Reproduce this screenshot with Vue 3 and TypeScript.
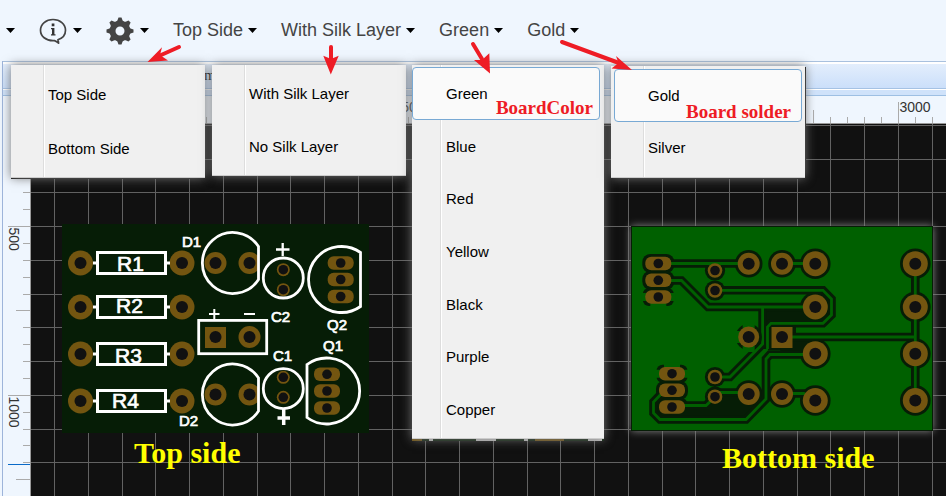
<script setup lang="ts">
import { computed, onBeforeUnmount, onMounted, ref } from 'vue'

interface Menu {
  id: string
  label: string
  items: string[]
  selected?: string
  note?: string
}

const menus: Menu[] = [
  { id: 'side', label: 'Top Side', items: ['Top Side', 'Bottom Side'] },
  { id: 'silk', label: 'With Silk Layer', items: ['With Silk Layer', 'No Silk Layer'] },
  {
    id: 'color',
    label: 'Green',
    items: ['Green', 'Blue', 'Red', 'Yellow', 'Black', 'Purple', 'Copper'],
    selected: 'Green',
    note: 'BoardColor',
  },
  { id: 'solder', label: 'Gold', items: ['Gold', 'Silver'], selected: 'Gold', note: 'Board solder' },
]

// The rulers and the grid are drawn only as far as the window reaches.
const viewWidth = ref(window.innerWidth)
const viewHeight = ref(window.innerHeight)
function measure(): void {
  viewWidth.value = window.innerWidth
  viewHeight.value = window.innerHeight
}
onMounted(() => window.addEventListener('resize', measure))
onBeforeUnmount(() => window.removeEventListener('resize', measure))

// Grid cells are 33.75px; the rulers carry two ticks per cell.
const CELL = 33.75
function lines(origin: number, extent: number): number[] {
  return Array.from({ length: Math.ceil(extent / CELL) }, (_, i) => Math.round(origin + CELL * i) + 0.5)
}
const gridX = computed(() => lines(23, viewWidth.value))
const gridY = computed(() => lines(0.75, viewHeight.value))

interface Tick {
  at: number
  size: number
  label: string
}
function ticks(origin: number, first: number, extent: number): Tick[] {
  const count = Math.floor((extent - origin) / (CELL / 2)) - first + 1
  return Array.from({ length: Math.max(count, 0) }, (_, i) => {
    const k = i + first
    const major = k % 10 === 0
    const mid = k % 5 === 0
    return {
      at: Math.round(origin + (CELL / 2) * k) + 0.5,
      size: major ? 22 : mid ? 14 : 7,
      label: major ? String((k / 10 + 1) * 500) : '',
    }
  })
}
const topTicks = computed(() => ticks(23, -1, viewWidth.value - 31))
const leftTicks = computed(() => ticks(130, -7, viewHeight.value - 96))

const resistors = [
  { name: 'R1', y: 263, tx: 117, ty: 271 },
  { name: 'R2', y: 307, tx: 116, ty: 313 },
  { name: 'R3', y: 354, tx: 115, ty: 363 },
  { name: 'R4', y: 401, tx: 112, ty: 408 },
]
const names = [
  { t: 'D1', x: 182, y: 247 },
  { t: 'C2', x: 271, y: 322 },
  { t: 'Q2', x: 327, y: 330 },
  { t: 'Q1', x: 323, y: 351 },
  { t: 'C1', x: 273, y: 361 },
  { t: 'D2', x: 179, y: 426 },
]

interface Pad {
  x: number
  y: number
  r: number
  h: number
}
const pad = (x: number, y: number, r: number, h: number): Pad => ({ x, y, r, h })
const topPads: Pad[] = [
  ...resistors.flatMap((r) => [pad(80.5, r.y, 12.5, 6), pad(182, r.y, 12.5, 6)]),
  pad(215.5, 263, 11, 6),
  pad(215.5, 394.5, 11, 6),
  pad(249.5, 263, 11, 6),
  pad(249.5, 394.5, 11, 6),
  pad(249.5, 337, 11, 6),
  pad(283.3, 269.7, 6.5, 4.8),
  pad(283.3, 289.7, 6.5, 4.8),
  pad(283.3, 377.3, 6.5, 4.8),
  pad(283.3, 397.3, 6.5, 4.8),
]
const topOvals = [
  [340.7, 263], [340.7, 279.5], [340.7, 296.5],
  [327, 374.3], [327, 391], [327, 408],
]
const bottomPads: Pad[] = [
  pad(715, 270.5, 7.3, 4.8),
  pad(715, 290.5, 7.3, 4.8),
  pad(715, 377, 7.3, 4.8),
  pad(715, 396.7, 7.3, 4.8),
  pad(748.7, 263.7, 11, 6),
  pad(782, 263.7, 11, 6),
  pad(748.7, 394, 11, 6),
  pad(782, 394, 11, 6),
  ...[263.7, 307, 353.7, 400.5].flatMap((y) => [pad(815.3, y, 12.5, 6), pad(915.3, y, 12.5, 6)]),
]
const bottomOvals = [
  [658.3, 263.5], [658.3, 280.3], [658.3, 297],
  [672, 373.7], [672, 390.3], [672, 407],
]
const clearOvals = bottomOvals.filter((_, i) => i !== 2 && i !== 3)
const thermalOvals = [bottomOvals[2], bottomOvals[3]]

const traces = [
  'M658 263.5H748',
  'M658 280.5H681.5L708 307H815',
  'M715 290.3H823L831.5 299V315L823 323.3H771L767.5 327V349',
  'M762.6 307V344L730 377H715',
  'M672 405.5H706L715 397',
  'M715 392.5H748',
  'M815 354.5H770L766 359V399L746 419.5H660L653.5 413V402L664 391',
  'M782 263.5H815',
  'M782 337H915',
  'M782 393.5H804L815 400',
  'M915.3 263V400',
]
</script>

<template>
  <div class="app">
    <header class="toolbar">
      <button class="tool" type="button" aria-label="More">
        <svg class="caret" viewBox="0 0 9 5"><path d="M0 0H9L4.5 5Z" /></svg>
      </button>
      <button class="tool" type="button" aria-label="Info">
        <svg class="info" viewBox="0 0 28 28">
          <path
            d="M14 2.5C7 2.5 1.5 7 1.5 13.2C1.5 19.4 7 23.7 14 23.7L15.5 23.6C17 24.2 18.3 25 19.6 26.2C19.5 24.7 19.3 23.7 18.9 22.7C23.5 21.2 26.5 17.6 26.5 13.2C26.5 7 21 2.5 14 2.5Z"
            fill="none" stroke="#444" stroke-width="1.7" stroke-linejoin="round"
          />
          <path d="M12.7 6.5H15.4V9.2H12.7ZM12 11H15.4V17.3H16.5V18.5H12V17.3H13V12.2H12Z" fill="#333" />
        </svg>
        <svg class="caret" viewBox="0 0 9 5"><path d="M0 0H9L4.5 5Z" /></svg>
      </button>
      <button class="tool" type="button" aria-label="Settings">
        <svg class="gear" viewBox="-14 -14 28 28">
          <g fill="#444">
            <path
              v-for="a in 8" :key="a" :transform="`rotate(${a * 45})`"
              d="M-5.500 -8L-2.600 -10.500L-1.500 -13.500H1.500L2.600 -10.500L5.500 -8Z"
            />
            <path fill-rule="evenodd" d="M-10 0A10 10 0 1 1 10 0A10 10 0 1 1 -10 0ZM-4.500 0A4.500 4.500 0 1 0 4.500 0A4.500 4.500 0 1 0 -4.500 0Z" />
          </g>
        </svg>
        <svg class="caret" viewBox="0 0 9 5"><path d="M0 0H9L4.5 5Z" /></svg>
      </button>
      <button v-for="m in menus" :key="m.id" class="tool tool-text" type="button" aria-haspopup="menu">
        <span>{{ m.label }}</span>
        <svg class="caret" viewBox="0 0 9 5"><path d="M0 0H9L4.5 5Z" /></svg>
      </button>
    </header>

    <main class="editor">
      <div class="tabs"><span class="tab">m</span></div>
      <div class="workspace">
        <svg class="ruler-left">
          <g v-for="t in leftTicks" :key="t.at">
            <line :x1="27 - t.size" x2="27" :y1="t.at" :y2="t.at" />
            <text v-if="t.label" :transform="`translate(6 ${t.at + 1}) rotate(90)`">{{ t.label }}</text>
          </g>
          <line class="cursor" x1="5" x2="27" y1="368.5" y2="368.5" />
        </svg>
        <svg class="ruler-top">
          <g v-for="t in topTicks" :key="t.at">
            <line :x1="t.at" :x2="t.at" :y1="28 - t.size" y2="28" />
            <text v-if="t.label" :x="t.at + 1" y="16">{{ t.label }}</text>
          </g>
        </svg>
        <section class="canvas">
          <svg class="grid">
            <line v-for="x in gridX" :key="'x' + x" :x1="x" :x2="x" y1="0" :y2="viewHeight" />
            <line v-for="y in gridY" :key="'y' + y" x1="0" :x2="viewWidth" :y1="y" :y2="y" />
          </svg>

          <svg class="board board-top" viewBox="62 224 307 209" role="img" aria-label="Top side of the board">
            <rect x="62" y="224" width="307" height="209" fill="#061d06" />
            <g fill="#735510">
              <circle v-for="(p, i) in topPads" :key="i" :cx="p.x" :cy="p.y" :r="p.r" />
              <rect v-for="(o, i) in topOvals" :key="'o' + i" :x="o[0] - 13" :y="o[1] - 6.7" width="26" height="13.4" rx="6" />
              <rect x="205" y="327" width="21" height="21" />
            </g>
            <g fill="#111">
              <circle v-for="(p, i) in topPads" :key="i" :cx="p.x" :cy="p.y" :r="p.h" />
              <circle v-for="(o, i) in topOvals" :key="'o' + i" :cx="o[0]" :cy="o[1]" r="4.8" />
              <circle cx="215.5" cy="337" r="6" />
            </g>
            <rect x="258" y="250" width="3" height="26" fill="#061d06" />
            <rect x="258" y="382" width="3" height="26" fill="#061d06" />
            <g fill="none" stroke="#fff" stroke-width="2.8">
              <g v-for="r in resistors" :key="r.name">
                <rect x="97.5" :y="r.y - 10.5" width="68" height="21" stroke-width="3" />
                <path :d="`M93 ${r.y}H97M167 ${r.y}H170`" />
              </g>
              <path d="M258.5 246.5A30.5 30.5 0 1 0 258.5 279.5Z" />
              <path d="M258.5 378A30.5 30.5 0 1 0 258.5 411Z" />
              <circle cx="283.3" cy="278" r="20" />
              <circle cx="283.3" cy="388.7" r="20" />
              <path d="M360.5 252.5A33 33 0 1 0 360.5 306.5Z" />
              <path d="M307 364.5A33 33 0 1 1 307 417.5Z" />
              <rect x="198.7" y="320.4" width="68" height="33.3" />
              <path d="M276 249.5H289.5M282.7 243V256" stroke-width="2.3" />
              <path d="M209 314H219.5M214.3 309V319M244 314H255" stroke-width="2" />
              <path d="M277.5 418H290M283.7 409V425" stroke-width="3.5" />
            </g>
            <g class="silk">
              <text v-for="r in resistors" :key="r.name" class="value" :x="r.tx" :y="r.ty">{{ r.name }}</text>
              <text v-for="n in names" :key="n.t" :x="n.x" :y="n.y">{{ n.t }}</text>
            </g>
          </svg>

          <svg class="board board-bottom" viewBox="631 226 302 205" role="img" aria-label="Bottom side of the board">
            <rect x="631" y="226" width="302" height="205" fill="#061d06" />
            <rect x="632" y="227" width="300" height="203" fill="#006000" />
            <g fill="#061d06">
              <circle v-for="(p, i) in bottomPads" :key="i" :cx="p.x" :cy="p.y" :r="p.r + 2.8" />
              <rect v-for="(o, i) in clearOvals" :key="'o' + i" :x="o[0] - 16" :y="o[1] - 9.5" width="32" height="19" rx="8" />
              <path d="M768 323H796V350H768Z" />
              <path d="M764 309H806L815 319L824 314L821 322H764Z" />
              <path d="M782 338H814L803 353H780Z" />
              <path d="M688 408H707L716 402L722 395H746L764 399L746 418H662L672 414Z" />
            </g>
            <g fill="none" stroke="#061d06" stroke-width="8.6">
              <path v-for="t in traces" :key="t" :d="t" />
            </g>
            <g fill="none" stroke="#006000" stroke-width="2.8">
              <path v-for="t in traces" :key="t" :d="t" />
            </g>
            <g v-for="(o, i) in thermalOvals" :key="'t' + i">
              <rect :x="o[0] - 15.5" :y="o[1] - 9" width="31" height="18" rx="6" fill="#061d06" />
              <path :d="`M${o[0] - 17} ${o[1]}H${o[0] + 17}`" stroke="#006000" stroke-width="8" />
              <path :d="`M${o[0]} ${i === 1 ? o[1] - 11 : o[1]}V${i === 1 ? o[1] : o[1] + 11}`" stroke="#006000" stroke-width="16" />
            </g>
            <circle cx="748.7" cy="337" r="13.2" fill="#061d06" />
            <path d="M734 337H757M748.7 322V352" stroke="#006000" stroke-width="12" />
            <g fill="#735510">
              <circle v-for="(p, i) in bottomPads" :key="i" :cx="p.x" :cy="p.y" :r="p.r" />
              <rect v-for="(o, i) in bottomOvals" :key="'o' + i" :x="o[0] - 13" :y="o[1] - 6.7" width="26" height="13.4" rx="6" />
              <circle cx="748.7" cy="337" r="10.5" />
              <rect x="771.5" y="327" width="21" height="21" />
            </g>
            <g fill="#111">
              <circle v-for="(p, i) in bottomPads" :key="i" :cx="p.x" :cy="p.y" :r="p.h" />
              <circle v-for="(o, i) in bottomOvals" :key="'o' + i" :cx="o[0]" :cy="o[1]" r="4.8" />
              <circle cx="748.7" cy="337" r="6" />
              <circle cx="782" cy="337" r="6" />
            </g>
          </svg>

          <svg class="board board-hidden" viewBox="0 0 192 20" aria-hidden="true">
            <rect width="192" height="20" fill="#061d06" />
            <path d="M0 19H10M123 19H152" stroke="#735510" stroke-width="2" />
            <path d="M17 19H21M64 19H84M112 19H116M176 19H190" stroke="#ccc" stroke-width="2" />
          </svg>

          <p class="caption caption-top">Top side</p>
          <p class="caption caption-bottom">Bottom side</p>
        </section>
      </div>
    </main>

    <ul v-for="m in menus" :key="m.id" :class="['menu', 'menu-' + m.id]">
      <li v-for="item in m.items" :key="item">
        <button type="button" :class="['item', { selected: item === m.selected }]">{{ item }}</button>
      </li>
      <li v-if="m.note" class="note">{{ m.note }}</li>
    </ul>

    <svg class="arrows" viewBox="0 0 946 90" aria-hidden="true">
      <g stroke="#ee1c25" stroke-width="4" stroke-linecap="round">
        <path d="M179 47L160 55.5" />
        <path d="M331 47V60" />
        <path d="M473 44L482 59" />
        <path d="M562 42L619 63" />
      </g>
      <g fill="#ee1c25">
        <path d="M147.5 62L162 47.3L160 55L168 60.5Z" />
        <path d="M330.8 74.5L323.3 55.7L331 59L338.7 55.7Z" />
        <path d="M490 73.5L474 60L482 60L489.3 53.3Z" />
        <path d="M632 70L611.5 68.5L618.5 63L616 56Z" />
      </g>
    </svg>
  </div>
</template>

<style>
body {
  margin: 0;
}
</style>

<style scoped>
.app {
  position: relative;
  display: flex;
  flex-direction: column;
  min-height: 100vh;
  overflow: hidden;
  background: #eff6fe;
  font-family: "Liberation Sans", Arial, sans-serif;
}
.toolbar {
  display: flex;
  align-items: center;
  gap: 24px;
  height: 61px;
  padding-left: 6px;
}
.tool {
  display: flex;
  align-items: center;
  gap: 6px;
  padding: 0;
  border: 0;
  background: none;
  color: #444;
  font: 18px "Liberation Sans", Arial, sans-serif;
  white-space: nowrap;
}
.tool-text {
  gap: 5px;
}
.caret {
  width: 9px;
  height: 5px;
}
.info,
.gear {
  width: 28px;
  height: 28px;
}
.editor {
  flex: 1;
  display: flex;
  flex-direction: column;
  margin-left: 2px;
  border-left: 1px solid #9db4da;
}
.tabs {
  box-sizing: border-box;
  height: 35px;
  padding: 3px 0 0 201px;
  border-top: 1px solid #a9c1de;
  border-bottom: 1px solid #9dbfe3;
  background: linear-gradient(#fff 0 2px, #e3eefc 2px, #cbdffa 26px, #a5c2e4 26px 27px, #fff 27px 28px, #cfe2fa 28px);
  font: 15px/20px "Liberation Serif", serif;
}
.workspace {
  flex: 1;
  display: grid;
  grid-template-columns: 28px 1fr;
  grid-template-rows: 28px 1fr;
}
.ruler-left {
  grid-row: 1 / 3;
  box-sizing: border-box;
  width: 28px;
  height: 100%;
  min-height: 0;
  border-right: 1px solid #999;
}
.ruler-top {
  box-sizing: border-box;
  width: 100%;
  height: 28px;
  border-bottom: 1px solid #999;
}
.ruler-left line,
.ruler-top line {
  stroke: #aaa;
}
.ruler-left .cursor {
  stroke: #0a6ac8;
}
.ruler-left text,
.ruler-top text {
  fill: #333;
  font-size: 14px;
}
.canvas {
  position: relative;
  overflow: hidden;
  background: #111;
}
.grid {
  position: absolute;
  inset: 0;
  width: 100%;
  height: 100%;
}
.grid line {
  stroke: #626262;
}
.board {
  position: absolute;
}
.board-top {
  left: 31px;
  top: 100px;
  width: 307px;
  height: 209px;
}
.board-bottom {
  left: 600px;
  top: 102px;
  width: 302px;
  height: 205px;
  box-shadow: 0 0 8px #888;
}
.board-hidden {
  left: 381px;
  top: 297px;
  width: 192px;
  height: 20px;
}
.silk {
  fill: #fff;
  stroke: #fff;
  stroke-width: 0.7px;
  font: 15px "Liberation Sans", Arial, sans-serif;
}
.silk .value {
  font-size: 21px;
}
.caption {
  position: absolute;
  margin: 0;
  color: #ff0;
  font: bold 30px/34px "Liberation Serif", "Times New Roman", serif;
  white-space: nowrap;
}
.caption-top {
  left: 103px;
  top: 312px;
}
.caption-bottom {
  left: 691px;
  top: 317px;
}
.menu {
  position: absolute;
  top: 65px;
  box-sizing: border-box;
  display: flex;
  flex-direction: column;
  width: 194px;
  height: 111px;
  margin: 0;
  padding: 2px;
  border-bottom: 1px solid #ccc;
  background: linear-gradient(90deg, transparent 32px, #ddd 32px 33px, #fff 33px 34px, transparent 34px) #f0f0f0;
  box-shadow: 0 0 10px #777;
  list-style: none;
}
.menu li {
  flex: 1;
  display: flex;
}
.item {
  flex: 1;
  padding: 0 0 0 34px;
  border: 1px solid transparent;
  border-radius: 4px;
  background: none;
  color: #000;
  font: 15px "Liberation Sans", Arial, sans-serif;
  text-align: left;
}
.item.selected {
  border-color: #78a9d4;
  background: #fafafa;
}
.menu-side {
  left: 11px;
  height: 113px;
  box-shadow: 0 0 10px #777, 0 1px 0 #111;
}
.menu-silk {
  left: 212px;
}
.menu-color {
  left: 412px;
  width: 192px;
  height: 374px;
  padding-left: 0;
  background: linear-gradient(90deg, transparent 28px, #ddd 28px 29px, #fff 29px 30px, transparent 30px) #f0f0f0;
}
.menu-color .item {
  padding-left: 33px;
}
.menu-color .item.selected {
  margin-right: 2px;
}
.menu-solder {
  left: 611px;
  top: 66px;
  height: 112px;
  padding: 3px;
  box-shadow: 0 0 10px #777, 1px 1px 0 #111;
}
.menu-solder .item {
  padding-left: 33px;
}
.menu .note {
  position: absolute;
  right: 11px;
  top: 32px;
  color: #ee1c25;
  font: bold 19px/22px "Liberation Serif", "Times New Roman", serif;
  white-space: nowrap;
}
.menu-solder .note {
  right: 14px;
  top: 35px;
}
.arrows {
  position: absolute;
  left: 0;
  top: 0;
  width: 946px;
  height: 90px;
  pointer-events: none;
}
</style>
